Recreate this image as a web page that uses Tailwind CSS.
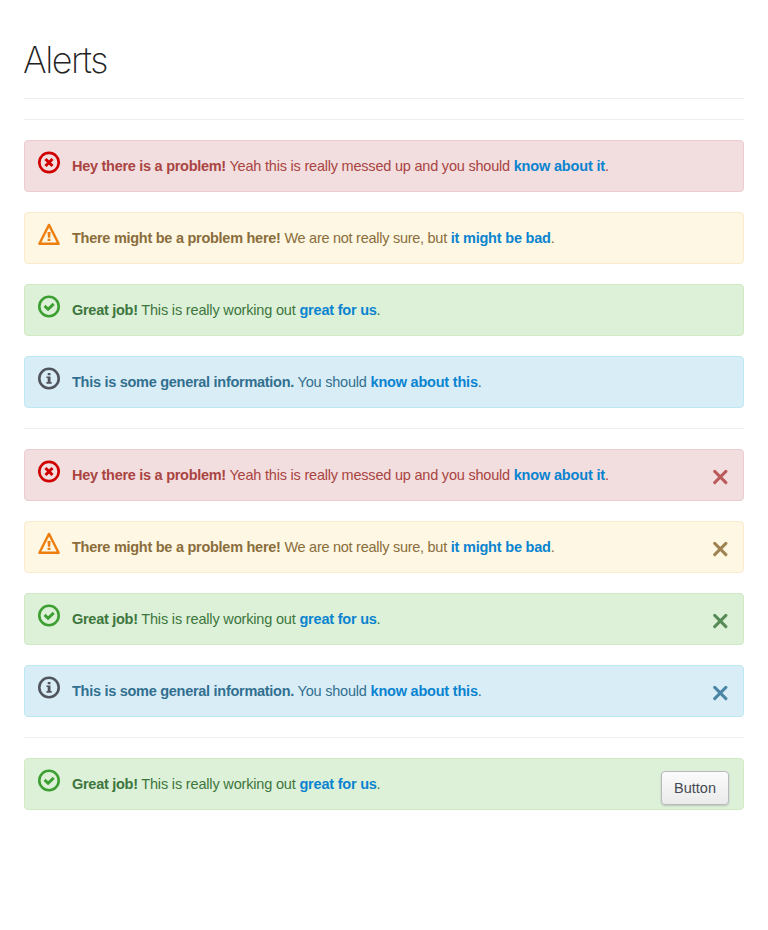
<!DOCTYPE html>
<html lang="en">
<head>
<meta charset="utf-8">
<title>Alerts</title>
<script src="https://cdn.jsdelivr.net/npm/@tailwindcss/browser@4"></script>
</head>
<body class="bg-white px-6 font-['Liberation_Sans',Arial,sans-serif] text-[14.5px] leading-5 tracking-[-0.21px]">
<svg class="hidden">
  <symbol id="error" viewBox="0 0 22 23">
    <circle cx="11" cy="11.5" r="9.7" fill="none" stroke="currentColor" stroke-width="2.7"/>
    <path d="M7.5 8l7 7M14.5 8l-7 7" fill="none" stroke="currentColor" stroke-width="3"/>
  </symbol>
  <symbol id="warning" viewBox="0 0 22 23">
    <path d="M11 1.9L20.6 20.8H1.4z" fill="none" stroke="currentColor" stroke-width="2.4" stroke-linejoin="round"/>
    <path d="M9.5 9h3.1l-.4 5.8h-2.3zM9.6 15.8h2.9v2.2H9.6z" fill="currentColor"/>
  </symbol>
  <symbol id="success" viewBox="0 0 22 23">
    <circle cx="11" cy="11.5" r="9.7" fill="none" stroke="currentColor" stroke-width="2.6"/>
    <path d="M6.6 10.9l3.5 3.3 5.6-5.3" fill="none" stroke="currentColor" stroke-width="2.9"/>
  </symbol>
  <symbol id="info" viewBox="0 0 22 23">
    <circle cx="11" cy="11.5" r="9.7" fill="none" stroke="currentColor" stroke-width="2.6"/>
    <path d="M9.7 6h2.8v2.3H9.7zM8.4 9.6h4.1v5.4h1.2v1.7H8.4v-1.7h1.3v-3.9H8.4z" fill="currentColor"/>
  </symbol>
  <symbol id="close" viewBox="0 0 16 16">
    <path d="M2.7 2.4l11.2 11.2M13.9 2.4L2.7 13.6" fill="none" stroke="currentColor" stroke-width="3" stroke-linecap="round"/>
  </symbol>
</svg>

<h1 class="h-[98px] pt-[40px] -ml-px text-[36px] leading-[40px] font-extralight tracking-[-1.5px] text-[#222] font-['Inter',sans-serif]">Alerts</h1>
<hr class="border-[#eee]">
<hr class="mt-5 border-[#eee]">

<section class="flex flex-col gap-5 py-5">
  <div class="flex h-[52px] items-start rounded border border-[#eaccd1] bg-[#f2dede] pl-[13px] text-[#a94442]">
    <svg class="mt-[10px] mr-3 h-[23px] w-[22px] text-[#d00000]"><use href="#error"/></svg>
    <p class="pt-[15px]"><strong class="tracking-[-0.28px]">Hey there is a problem!</strong> Yeah this is really messed up and you should <a class="font-bold tracking-[-0.17px] text-[#0a84d0]">know about it</a>.</p>
  </div>
  <div class="flex h-[52px] items-start rounded border border-[#faebcc] bg-[#fdf7e3] pl-[13px] text-[#8a6d3b]">
    <svg class="mt-[10px] mr-3 h-[23px] w-[22px] text-[#ed7f11]"><use href="#warning"/></svg>
    <p class="pt-[15px] tracking-[-0.27px]"><strong>There might be a problem here!</strong> We are not really sure, but <a class="font-bold tracking-[-0.2px] text-[#0a84d0]">it might be bad</a>.</p>
  </div>
  <div class="flex h-[52px] items-start rounded border border-[#d2e9c4] bg-[#ddf0d8] pl-[13px] text-[#3c763d]">
    <svg class="mt-[10px] mr-3 h-[23px] w-[22px] text-[#3c9f31]"><use href="#success"/></svg>
    <p class="pt-[15px] tracking-[-0.17px]"><strong class="tracking-[-0.28px]">Great job!</strong> This is really working out <a class="font-bold tracking-[-0.22px] text-[#0a84d0]">great for us</a>.</p>
  </div>
  <div class="flex h-[52px] items-start rounded border border-[#bce8f1] bg-[#d9edf7] pl-[13px] text-[#31708f]">
    <svg class="mt-[10px] mr-3 h-[23px] w-[22px] text-[#50555d]"><use href="#info"/></svg>
    <p class="pt-[15px]"><strong class="tracking-[-0.28px]">This is some general information.</strong> You should <a class="font-bold text-[#0a84d0]">know about this</a>.</p>
  </div>
</section>
<hr class="border-[#eee]">

<section class="flex flex-col gap-5 py-5">
  <div class="flex h-[52px] items-start rounded border border-[#eaccd1] bg-[#f2dede] pr-[14px] pl-[13px] text-[#a94442]">
    <svg class="mt-[10px] mr-3 h-[23px] w-[22px] text-[#d00000]"><use href="#error"/></svg>
    <p class="grow pt-[15px]"><strong class="tracking-[-0.28px]">Hey there is a problem!</strong> Yeah this is really messed up and you should <a class="font-bold tracking-[-0.17px] text-[#0a84d0]">know about it</a>.</p>
    <button class="mt-[19px] h-4 w-[17px] text-[#ba5b5b]" aria-label="Close"><svg class="size-4"><use href="#close"/></svg></button>
  </div>
  <div class="flex h-[52px] items-start rounded border border-[#faebcc] bg-[#fdf7e3] pr-[14px] pl-[13px] text-[#8a6d3b]">
    <svg class="mt-[10px] mr-3 h-[23px] w-[22px] text-[#ed7f11]"><use href="#warning"/></svg>
    <p class="grow pt-[15px] tracking-[-0.27px]"><strong>There might be a problem here!</strong> We are not really sure, but <a class="font-bold tracking-[-0.2px] text-[#0a84d0]">it might be bad</a>.</p>
    <button class="mt-[19px] h-4 w-[17px] text-[#9e8351]" aria-label="Close"><svg class="size-4"><use href="#close"/></svg></button>
  </div>
  <div class="flex h-[52px] items-start rounded border border-[#d2e9c4] bg-[#ddf0d8] pr-[14px] pl-[13px] text-[#3c763d]">
    <svg class="mt-[10px] mr-3 h-[23px] w-[22px] text-[#3c9f31]"><use href="#success"/></svg>
    <p class="grow pt-[15px] tracking-[-0.17px]"><strong class="tracking-[-0.28px]">Great job!</strong> This is really working out <a class="font-bold tracking-[-0.22px] text-[#0a84d0]">great for us</a>.</p>
    <button class="mt-[19px] h-4 w-[17px] text-[#568b58]" aria-label="Close"><svg class="size-4"><use href="#close"/></svg></button>
  </div>
  <div class="flex h-[52px] items-start rounded border border-[#bce8f1] bg-[#d9edf7] pr-[14px] pl-[13px] text-[#31708f]">
    <svg class="mt-[10px] mr-3 h-[23px] w-[22px] text-[#50555d]"><use href="#info"/></svg>
    <p class="grow pt-[15px]"><strong class="tracking-[-0.28px]">This is some general information.</strong> You should <a class="font-bold text-[#0a84d0]">know about this</a>.</p>
    <button class="mt-[19px] h-4 w-[17px] text-[#4a85a5]" aria-label="Close"><svg class="size-4"><use href="#close"/></svg></button>
  </div>
</section>
<hr class="border-[#eee]">

<section class="py-5">
  <div class="flex h-[52px] items-start rounded border border-[#d2e9c4] bg-[#ddf0d8] pr-[14px] pl-[13px] text-[#3c763d]">
    <svg class="mt-[10px] mr-3 h-[23px] w-[22px] text-[#3c9f31]"><use href="#success"/></svg>
    <p class="grow pt-[15px] tracking-[-0.17px]"><strong class="tracking-[-0.28px]">Great job!</strong> This is really working out <a class="font-bold tracking-[-0.22px] text-[#0a84d0]">great for us</a>.</p>
    <button class="mt-3 h-[34px] w-[68px] rounded border border-[#b9b9bf] bg-linear-to-b from-[#fbfbfb] to-[#ebebeb] text-[14.5px] tracking-normal text-[#444a54] shadow-[0_1px_2px_rgba(0,0,0,0.18)]">Button</button>
  </div>
</section>
</body>
</html>
